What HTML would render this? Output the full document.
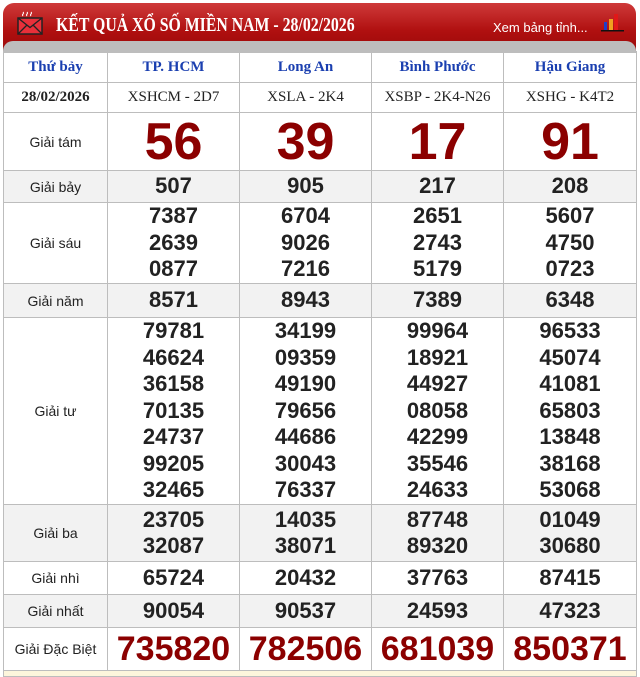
<!DOCTYPE html>
<html><head><meta charset="utf-8"><style>
*{margin:0;padding:0;box-sizing:border-box}
body{width:640px;height:673px;background:#fff;position:relative;overflow:hidden;font-family:"Liberation Sans",Arial,sans-serif}
.ban{position:absolute;left:3px;top:3px;width:633px;height:50px;border-radius:11px 11px 0 0;background:linear-gradient(#cf3a3a,#b01010 55%,#9a0808);}
.grey{position:absolute;left:3px;top:41px;width:633px;height:12px;background:#bdbdbd;border-radius:10px 10px 0 0}
.title{position:absolute;left:56px;top:14px;color:#fff;font-family:"Liberation Serif",serif;font-weight:bold;font-size:20px;white-space:nowrap;transform:scaleX(0.79);transform-origin:left top}
.xem{position:absolute;left:493px;top:20px;color:#fff;font-size:13px}
table{position:absolute;left:3px;top:51px;width:633px;border-collapse:collapse;table-layout:fixed}
td{border:1px solid #bdbdbd;text-align:center;vertical-align:middle;color:#222;padding:0}
.h td{font-family:"Liberation Serif",serif;font-weight:bold;color:#1a3fb0;font-size:15px;height:31px}
.d td{font-family:"Liberation Serif",serif;font-size:15px;height:30px}
.g{background:#f2f2f2}
.l{font-size:14px;color:#222}
.n{font-weight:bold;font-size:22px;line-height:26.5px}
.big{font-weight:bold;font-size:52px;color:#8b0000;line-height:54px}
.db{font-weight:bold;font-size:34px;color:#8b0000;line-height:40px}
</style></head><body>
<div class="ban"></div><div class="grey"></div>
<svg style="position:absolute;left:17px;top:11px" width="28" height="26" viewBox="0 0 28 26">
<path d="M6 1q1 1 0 2q-1 1 0 2M10 1q1 1 0 2q-1 1 0 2M14 1q1 1 0 2q-1 1 0 2" stroke="#fff" stroke-width="1" fill="none"/>
<rect x="1" y="7" width="24" height="16" fill="#e8303a" stroke="#222" stroke-width="1.5"/>
<path d="M1 7l12 9.5L25 7M1 23l8.5-8.5M25 23l-8.5-8.5" stroke="#222" stroke-width="1.3" fill="none"/></svg>
<div class="title">KẾT QUẢ XỔ SỐ MIỀN NAM - 28/02/2026</div>
<div class="xem">Xem bảng tỉnh...</div>
<svg style="position:absolute;left:600px;top:13px" width="25" height="20"><rect x="4" y="9" width="3" height="8" fill="#1d3fc8"/><rect x="9" y="6" width="4" height="11" fill="#f0a020"/><rect x="14" y="1" width="4" height="16" fill="#e01818"/><rect x="1" y="17" width="23" height="1.5" fill="#111"/></svg>
<table>
<colgroup><col style="width:104px"><col style="width:132px"><col style="width:132px"><col style="width:132px"><col style="width:133px"></colgroup>
<tr class="h"><td>Thứ bảy</td><td>TP. HCM</td><td>Long An</td><td>Bình Phước</td><td>Hậu Giang</td></tr>
<tr class="d"><td style="font-weight:bold">28/02/2026</td><td>XSHCM - 2D7</td><td>XSLA - 2K4</td><td>XSBP - 2K4-N26</td><td>XSHG - K4T2</td></tr>
<tr style="height:58px"><td class="l">Giải tám</td><td class="big">56</td><td class="big">39</td><td class="big">17</td><td class="big">91</td></tr>
<tr class="g" style="height:32px"><td class="l">Giải bảy</td><td class="n">507</td><td class="n">905</td><td class="n">217</td><td class="n">208</td></tr>
<tr style="height:81px"><td class="l">Giải sáu</td><td class="n">7387<br>2639<br>0877</td><td class="n">6704<br>9026<br>7216</td><td class="n">2651<br>2743<br>5179</td><td class="n">5607<br>4750<br>0723</td></tr>
<tr class="g" style="height:34px"><td class="l">Giải năm</td><td class="n">8571</td><td class="n">8943</td><td class="n">7389</td><td class="n">6348</td></tr>
<tr style="height:187px"><td class="l">Giải tư</td><td class="n">79781<br>46624<br>36158<br>70135<br>24737<br>99205<br>32465</td><td class="n">34199<br>09359<br>49190<br>79656<br>44686<br>30043<br>76337</td><td class="n">99964<br>18921<br>44927<br>08058<br>42299<br>35546<br>24633</td><td class="n">96533<br>45074<br>41081<br>65803<br>13848<br>38168<br>53068</td></tr>
<tr class="g" style="height:57px"><td class="l">Giải ba</td><td class="n">23705<br>32087</td><td class="n">14035<br>38071</td><td class="n">87748<br>89320</td><td class="n">01049<br>30680</td></tr>
<tr style="height:33px"><td class="l">Giải nhì</td><td class="n">65724</td><td class="n">20432</td><td class="n">37763</td><td class="n">87415</td></tr>
<tr class="g" style="height:33px"><td class="l">Giải nhất</td><td class="n">90054</td><td class="n">90537</td><td class="n">24593</td><td class="n">47323</td></tr>
<tr style="height:43px"><td class="l">Giải Đặc Biệt</td><td class="db">735820</td><td class="db">782506</td><td class="db">681039</td><td class="db">850371</td></tr>
<tr style="height:6px;background:#fdf6dc"><td colspan="5"></td></tr>
</table>
</body></html>
